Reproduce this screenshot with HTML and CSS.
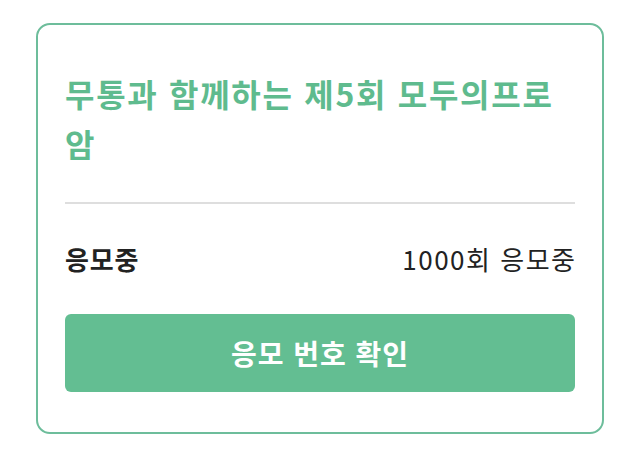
FILE: index.html
```html
<!DOCTYPE html>
<html lang="ko">
<head>
<meta charset="utf-8">
<link rel="stylesheet" href="styles.css">
</head>
<body>
<div class="card">
  <h1 class="title">무통과 함께하는 제5회 모두의프로<br>암</h1>
  <hr class="divider">
  <div class="row">
    <span class="label">응모중</span>
    <span class="value">1000회 응모중</span>
  </div>
  <button class="btn">응모 번호 확인</button>
</div>
</body>
</html>
```

FILE: styles.css
```css
* { box-sizing: border-box; }
html, body { margin: 0; padding: 0; background: #ffffff; }
body {
  font-family: "Noto Sans CJK KR", "Noto Sans", sans-serif;
  padding: 23px 36px 0 36px;
}
.card {
  width: 568px;
  height: 411px;
  border: 2px solid #6dbd9b;
  border-radius: 14px;
  padding: 43px 27px 38px 27px;
  display: flex;
  flex-direction: column;
}
.title {
  margin: 0;
  font-size: 32px;
  line-height: 50px;
  font-weight: 700;
  color: #5fbb8e;
  letter-spacing: 1.7px;
  white-space: nowrap;
}
.divider {
  margin: 34px 0 0 0;
  border: none;
  border-top: 2px solid #dedede;
  height: 0;
}
.row {
  margin-top: 39px;
  height: 30px;
  display: flex;
  justify-content: space-between;
  align-items: center;
}
.label {
  font-size: 26px;
  font-weight: 700;
  color: #222222;
  letter-spacing: 0.8px;
}
.value {
  font-size: 26px;
  font-weight: 400;
  color: #222222;
  letter-spacing: 1.5px;
  margin-right: -1.5px;
}
.btn {
  margin-top: 41px;
  height: 78px;
  border: none;
  border-radius: 6px;
  background: #63be92;
  color: #ffffff;
  font-family: inherit;
  font-size: 28px;
  font-weight: 700;
  letter-spacing: 1px;
  width: 100%;
}
```
